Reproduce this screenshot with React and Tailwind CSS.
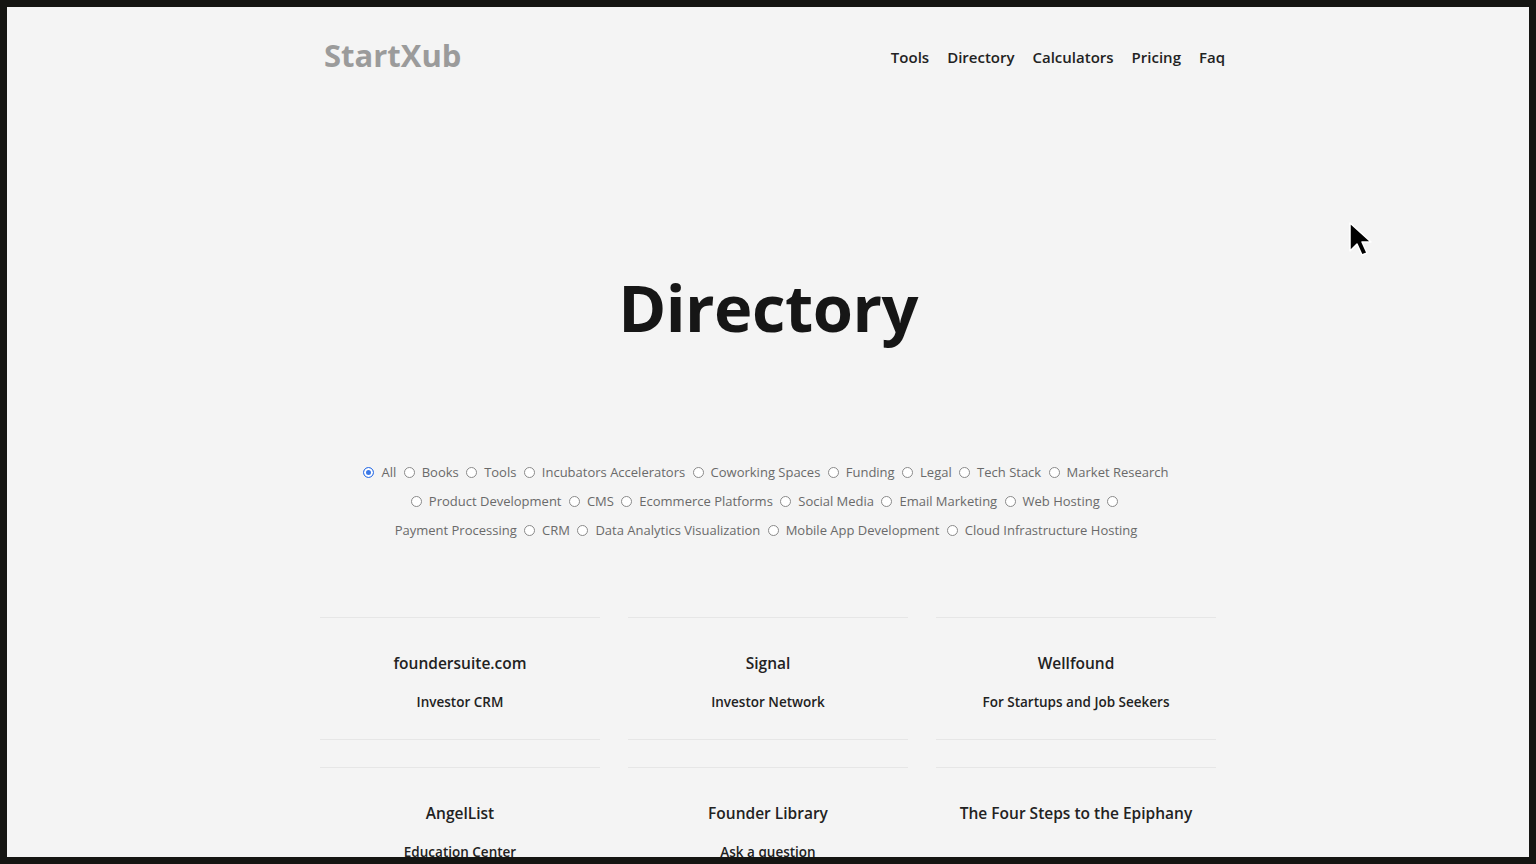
import React from "react";

const cats = [
  ["All", "Books", "Tools", "Incubators Accelerators", "Coworking Spaces", "Funding", "Legal", "Tech Stack", "Market Research"],
  ["Product Development", "CMS", "Ecommerce Platforms", "Social Media", "Email Marketing", "Web Hosting", "Payment Processing", "CRM", "Data Analytics Visualization", "Mobile App Development", "Cloud Infrastructure Hosting"],
];

const cards = [
  ["foundersuite.com", "Investor CRM"],
  ["Signal", "Investor Network"],
  ["Wellfound", "For Startups and Job Seekers"],
  ["AngelList", "Education Center"],
  ["Founder Library", "Ask a question"],
  ["The Four Steps to the Epiphany", ""],
];

function Radio({ checked }) {
  return (
    <input
      type="radio"
      name="cat"
      defaultChecked={checked}
      className="appearance-none inline-block align-[-1px] w-[11px] h-[11px] rounded-full border border-[#8a8a8a] bg-white mr-[7px] checked:border-[#3b78e7] checked:bg-[#3b78e7] checked:shadow-[inset_0_0_0_2px_white]"
    />
  );
}

function Item({ label, checked }) {
  return (
    <>
      <Radio checked={checked} />
      <span className="mr-[4px]">{label}</span>{" "}
    </>
  );
}

export default function App() {
  const font = { fontFamily: '"Open Sans", "Noto Sans", sans-serif' };
  return (
    <div className="bg-[#151512] p-[7px] w-[1536px] h-[864px]" style={font}>
      <div className="relative h-[850px] bg-[#f4f4f4] overflow-hidden">
        <header className="flex items-center justify-between pl-[317px] pr-[304px] pt-[25px]">
          <div className="text-[31px] font-bold text-[#9b9b9b] tracking-[0px]">StartXub</div>
          <nav className="flex gap-[18px] text-[15px] font-semibold text-[#222] pt-[3px] pl-[2px]">
            <span>Tools</span>
            <span>Directory</span>
            <span>Calculators</span>
            <span>Pricing</span>
            <span>Faq</span>
          </nav>
        </header>

        <h1 className="text-center text-[65px] font-bold text-[#161616] mt-[182px] leading-[92px] tracking-[-0.5px]">
          Directory
        </h1>

        <div className="mx-auto w-[860px] mt-[105px] text-center text-[13px] leading-[29px] text-[#6a6a6a]">
          <Item label="All" checked />
          {cats[0].slice(1).map((c) => (
            <Item key={c} label={c} />
          ))}
          <br />
          {cats[1].slice(0, 6).map((c) => (
            <Item key={c} label={c} />
          ))}
          <Radio />
          <br />
          <span className="mr-[4px]">Payment Processing</span>{" "}
          {cats[1].slice(7).map((c) => (
            <Item key={c} label={c} />
          ))}
        </div>

        <div className="mx-auto w-[896px] mt-[72px] grid grid-cols-3 gap-x-[28px] gap-y-[27px]">
          {cards.map(([t, s]) => (
            <div key={t} className="h-[123px] border-y border-[#e6e6e6] flex flex-col items-center pt-[32px] text-[#222]">
              <div className="text-[15.5px] font-semibold leading-[26px]">{t}</div>
              <div className="text-[13.5px] font-semibold leading-[20px] mt-[16px]">{s}</div>
            </div>
          ))}
        </div>

        <svg className="absolute left-[1341px] top-[214px]" width="26" height="38" viewBox="0 0 26 38">
          <path d="M2 2 L2 30 L9 23 L14 34 L19 32 L14 21 L23 21 Z" fill="black" stroke="white" strokeWidth="1.5" strokeLinejoin="round" />
        </svg>
      </div>
    </div>
  );
}
